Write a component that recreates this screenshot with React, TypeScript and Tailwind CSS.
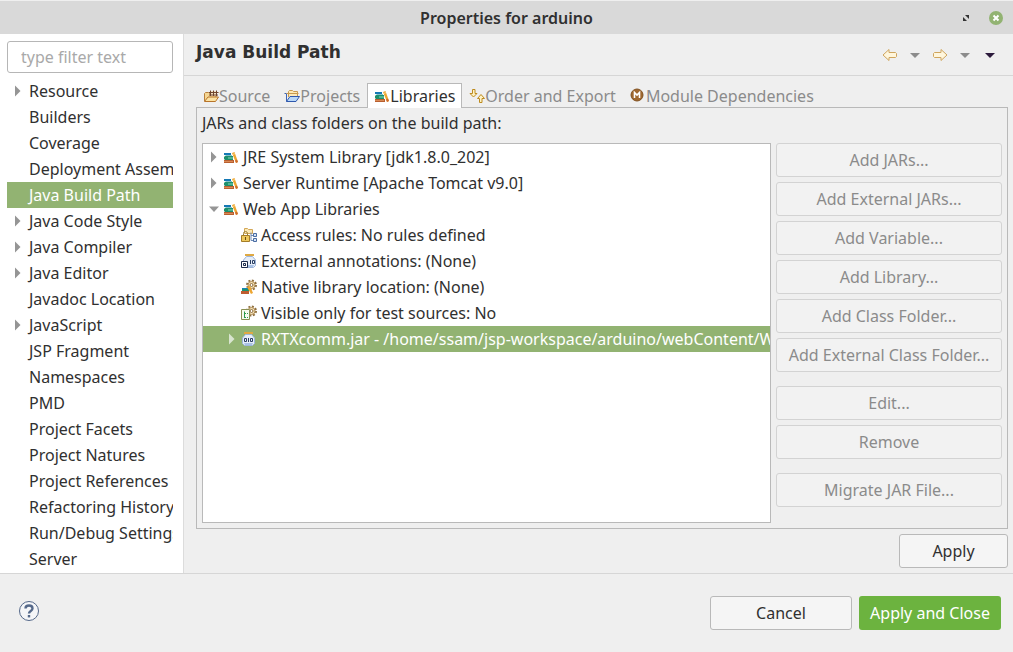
import { useState } from "react";
import type { ReactNode } from "react";
import clsx from "clsx";

type Page = { name: string; expandable?: boolean };

type Entry = {
  label: string;
  icon: ReactNode;
  depth: number;
  arrow?: "closed" | "open";
};

const pages: Page[] = [
  { name: "Resource", expandable: true },
  { name: "Builders" },
  { name: "Coverage" },
  { name: "Deployment Assembly" },
  { name: "Java Build Path" },
  { name: "Java Code Style", expandable: true },
  { name: "Java Compiler", expandable: true },
  { name: "Java Editor", expandable: true },
  { name: "Javadoc Location" },
  { name: "JavaScript", expandable: true },
  { name: "JSP Fragment" },
  { name: "Namespaces" },
  { name: "PMD" },
  { name: "Project Facets" },
  { name: "Project Natures" },
  { name: "Project References" },
  { name: "Refactoring History" },
  { name: "Run/Debug Settings" },
  { name: "Server" },
];

function Arrow({ open, light }: { open?: boolean; light?: boolean }) {
  return (
    <svg className="w-3 h-3 shrink-0" viewBox="0 0 12 12" fill={light ? "#d9e5d0" : "#959595"}>
      {open ? <path d="M1 3.500h10L6 9z" /> : <path d="M3 .5v11L8.500 6z" />}
    </svg>
  );
}

function Icon({ children }: { children: ReactNode }) {
  return (
    <svg className="w-4 h-4 shrink-0" viewBox="0 0 16 16" fill="none" aria-hidden="true">
      {children}
    </svg>
  );
}

function BooksIcon() {
  return (
    <Icon>
      <path d="M1 4h7v2H1z" fill="#1579b5" />
      <path d="M3 6h6v1H2z" fill="#7fc0c8" />
      <path d="M2 7h8v4H2l-1-1V8z" fill="#1c8f6c" />
      <path d="M5 8h5v2H5z" fill="#4fb391" />
      <path d="M1 11h10v3H1z" fill="#b85f30" />
      <path d="M1 12h9v1H1z" fill="#d98a55" />
      <path d="M9 4l2.500-1L15 13l-2 1z" fill="#eda632" />
      <path d="M12 11.500l2-1 1 2.500-2 1z" fill="#cf6b2d" />
      <path d="M10 5.500l2-1" stroke="#fad27e" />
    </Icon>
  );
}

function SourceIcon() {
  return (
    <Icon>
      <path d="M1.500 13V5.500l1-1h3l1 1H13V9" fill="#f6d794" stroke="#b8803c" />
      <path d="M7 3h7v5H7z" fill="#f3e0c0" />
      <path d="M6 4.500h9.500M6 7h9M7.500 2.500V8M10.500 2.500V8M13.500 2.500V8" stroke="#70452e" />
      <path d="M1.500 13.500L5 9h10.500l-3 4.500z" fill="#fce3a3" stroke="#b8742a" />
    </Icon>
  );
}

function ProjectsIcon() {
  return (
    <Icon>
      <path d="M4.500 9V3.500l1-1h3l1 1h4V9" fill="#fbe9b8" stroke="#c89a4e" />
      <path d="M2.500 13.500V5.500H0.500" stroke="#3d63b5" />
      <path d="M2.500 5.500h12" stroke="#c89a4e" />
      <path d="M2.500 13.500l3.500-5h9.500l-3.500 5z" fill="#b9d8f8" stroke="#2f58ad" />
    </Icon>
  );
}

function OrderIcon() {
  return (
    <Icon>
      <path d="M3.500 1.500h2.500v4h2L4.500 9 1 5.500h2.500z" fill="#fff3c4" stroke="#bd8a1e" />
      <path d="M10.500 14.500H13v-4h2.500L12 6.500 8.500 10.500h2z" fill="#fff3c4" stroke="#bd8a1e" />
    </Icon>
  );
}

function ModuleIcon() {
  return (
    <Icon>
      <circle cx="7" cy="7" r="6" fill="#a0682f" stroke="#80501f" />
      <path d="M4.500 10V4.500L7 7l2.500-2.500V10" stroke="#fff" strokeWidth="1.600" />
    </Icon>
  );
}

function AccessIcon() {
  return (
    <Icon>
      <path d="M3.500 6.500v-5h3l1 1h4v4z" fill="#fbe8b5" stroke="#d3a757" />
      <path d="M10 5.500v8h3M10 8.500h3" stroke="#6f8bb5" />
      <path d="M12.500 6.500h3v3h-3zM12.500 11.500h3v3h-3z" fill="#d5e3f6" stroke="#4a6da3" />
      <path d="M2.500 8.500v-2a2 2 0 0 1 4 0v2" stroke="#9b8238" />
      <path d="M.5 8.500h8v6h-8z" fill="#edc85c" stroke="#a47d28" />
      <path d="M4 10h1v3H4z" fill="#6b4e14" />
    </Icon>
  );
}

function Jar() {
  return (
    <>
      <path d="M3 1h9v2H3z" fill="#dfa943" />
      <path d="M4.500 3.500h6l3 3.500v5.500l-2 2h-8l-2-2V7z" fill="#e6eef9" stroke="#9db5db" />
      <path d="M3 12h9l-1 2H4z" fill="#a9c2e6" />
    </>
  );
}

function JarIcon() {
  return (
    <Icon>
      <Jar />
      <path d="M3.500 7.500h2v3h-2zM7.500 7v4M9.500 7.500h2v3h-2z" stroke="#2a3f63" />
    </Icon>
  );
}

function AnnotationIcon() {
  return (
    <Icon>
      <g transform="translate(1)">
        <Jar />
      </g>
      <path d="M9.500 7v4M11.500 7.500h2v3h-2z" stroke="#2a3f63" />
      <path d="M.5 8.500h6v6h-6z" fill="#fff" stroke="#1d2b4c" />
      <path d="M5 12.500H2.500v-2h2v1.500" stroke="#1d2b4c" />
    </Icon>
  );
}

function Gear() {
  return (
    <>
      <circle cx="10.500" cy="6" r="4.500" stroke="#8f7040" strokeWidth="2" strokeDasharray="2 1.500" />
      <circle cx="10.500" cy="6" r="3.500" fill="#f5e3b8" stroke="#b08c55" />
      <circle cx="10.500" cy="6" r="1.500" fill="#fff" stroke="#8b6a3c" />
    </>
  );
}

function NativeIcon() {
  return (
    <Icon>
      <Gear />
      <path d="M1 9h6v1H1z" fill="#1583b8" />
      <path d="M1 10h7v2H1z" fill="#1c9272" />
      <path d="M0 12h8v3H0z" fill="#bf5d30" />
      <path d="M6 8l3-1 3 7-2 1z" fill="#eda632" />
    </Icon>
  );
}

function TestIcon() {
  return (
    <Icon>
      <Gear />
      <path d="M.5 4.500h8v10h-8z" fill="#f7faf0" stroke="#8a8f52" />
      <path d="M3.500 6.500v6M3 8.500h2M3 12.500h2M6 8.500h1M6 12.500h1" stroke="#2c9a4b" />
    </Icon>
  );
}

const tabs = [
  { name: "Source", icon: <SourceIcon /> },
  { name: "Projects", icon: <ProjectsIcon /> },
  { name: "Libraries", icon: <BooksIcon /> },
  { name: "Order and Export", icon: <OrderIcon /> },
  { name: "Module Dependencies", icon: <ModuleIcon /> },
];

const entries: Entry[] = [
  { label: "JRE System Library [jdk1.8.0_202]", icon: <BooksIcon />, depth: 0, arrow: "closed" },
  { label: "Server Runtime [Apache Tomcat v9.0]", icon: <BooksIcon />, depth: 0, arrow: "closed" },
  { label: "Web App Libraries", icon: <BooksIcon />, depth: 0, arrow: "open" },
  { label: "Access rules: No rules defined", icon: <AccessIcon />, depth: 1 },
  { label: "External annotations: (None)", icon: <AnnotationIcon />, depth: 1 },
  { label: "Native library location: (None)", icon: <NativeIcon />, depth: 1 },
  { label: "Visible only for test sources: No", icon: <TestIcon />, depth: 1 },
  {
    label: "RXTXcomm.jar - /home/ssam/jsp-workspace/arduino/webContent/WEB-INF/lib",
    icon: <JarIcon />,
    depth: 1,
    arrow: "closed",
  },
];

const actionGroups = [
  ["Add JARs...", "Add External JARs...", "Add Variable...", "Add Library...", "Add Class Folder...", "Add External Class Folder..."],
  ["Edit...", "Remove"],
  ["Migrate JAR File..."],
];

function TitleBar() {
  return (
    <header className="relative flex h-[34px] shrink-0 items-center justify-center border-t border-[#efefef] bg-[#d9d9d9]">
      <h1 className="text-[16px] font-semibold">Properties for arduino</h1>
      <div className="absolute right-2.5 flex items-center gap-4">
        <button type="button" aria-label="Maximize">
          <svg className="w-3.5 h-3.5" viewBox="0 0 14 14" fill="#333">
            <path d="M6 4h4v4zM4 6v4h4z" />
          </svg>
        </button>
        <button type="button" aria-label="Close">
          <svg className="w-3.5 h-3.5" viewBox="0 0 14 14">
            <circle cx="7" cy="7" r="7" fill="#92b372" />
            <path d="M4.500 4.500l5 5M9.500 4.500l-5 5" stroke="#fff" strokeWidth="2" />
          </svg>
        </button>
      </div>
    </header>
  );
}

function Sidebar() {
  const [selected, setSelected] = useState("Java Build Path");

  return (
    <nav className="w-[184px] shrink-0 border-r border-[#dcdcdc] bg-white pt-[7px] pr-2.5 pl-[7px]">
      <input
        type="text"
        aria-label="Filter pages"
        placeholder="type filter text"
        className="mb-[5px] block h-8 w-full rounded-[3px] border border-[#b6b6b6] px-[13px] placeholder:text-[#a9a9a9]"
      />
      <ul>
        {pages.map((page) => (
          <li key={page.name}>
            <button
              type="button"
              onClick={() => setSelected(page.name)}
              className={clsx(
                "flex h-[26px] w-full items-center gap-[5px] overflow-hidden pl-[5px] whitespace-nowrap",
                selected === page.name && "bg-[#92b372] text-white"
              )}
            >
              {page.expandable ? <Arrow /> : <span className="w-3 shrink-0" />}
              {page.name}
            </button>
          </li>
        ))}
      </ul>
    </nav>
  );
}

function MenuArrow({ label, color }: { label: string; color: string }) {
  return (
    <button type="button" aria-label={label}>
      <svg className="w-4 h-4" viewBox="0 0 16 16" fill={color}>
        <path d="M3 6h10l-5 5z" />
      </svg>
    </button>
  );
}

function History() {
  return (
    <div className="flex items-center gap-[9px]">
      <button type="button" aria-label="Back">
        <svg className="w-4 h-4" viewBox="0 0 16 16">
          <path d="M1 8l6-5.500v3h6.500l1 1v3l-1 1H7v3z" fill="#fff6dc" stroke="#cfa55e" strokeLinejoin="round" />
        </svg>
      </button>
      <MenuArrow label="Back history" color="#8c8c8c" />
      <button type="button" aria-label="Forward">
        <svg className="w-4 h-4" viewBox="0 0 16 16">
          <path d="M15 8L9 2.500v3H2.500l-1 1v3l1 1H9v3z" fill="#fff6dc" stroke="#cfa55e" strokeLinejoin="round" />
        </svg>
      </button>
      <MenuArrow label="Forward history" color="#8c8c8c" />
      <MenuArrow label="View menu" color="#2c1a3c" />
    </div>
  );
}

function LibraryTree() {
  const [selected, setSelected] = useState(entries.length - 1);

  return (
    <ul className="min-w-0 flex-1 overflow-hidden border border-[#b9b9b9] bg-white">
      {entries.map((entry, i) => (
        <li key={entry.label}>
          <button
            type="button"
            onClick={() => setSelected(i)}
            className={clsx(
              "flex h-[26px] w-full items-center whitespace-nowrap",
              entry.depth === 0 ? "pl-[5px]" : "pl-[23px]",
              selected === i && "bg-[#92b372] text-white"
            )}
          >
            {entry.arrow ? (
              <Arrow open={entry.arrow === "open"} light={selected === i} />
            ) : (
              <span className="w-3 shrink-0" />
            )}
            <span className="ml-[3px] mr-1">{entry.icon}</span>
            {entry.label}
          </button>
        </li>
      ))}
    </ul>
  );
}

export default function App() {
  const [tab, setTab] = useState("Libraries");

  return (
    <div className="flex min-h-screen flex-col bg-[#efefef] font-['Noto_Sans',sans-serif] text-[16px] leading-6 text-[#303030]">
      <TitleBar />

      <div className="flex flex-1">
        <Sidebar />

        <main className="flex min-w-0 flex-1 flex-col">
          <div className="flex h-[42px] items-center justify-between border-b border-[#d6d6d6] pr-[15px] pl-3">
            <h2 className="pb-1.5 font-['DejaVu_Sans',sans-serif] text-[17px] font-bold">Java Build Path</h2>
            <History />
          </div>

          <div className="flex flex-1 flex-col pt-[7px] pr-[5px] pb-[5px] pl-3">
            <div role="tablist" className="z-10 -mb-px flex">
              {tabs.map(({ name, icon }) => (
                <button
                  key={name}
                  type="button"
                  role="tab"
                  aria-selected={tab === name}
                  onClick={() => setTab(name)}
                  className={clsx(
                    "flex h-[25px] items-center border border-b-0 px-1.5 whitespace-nowrap",
                    tab === name ? "border-[#b9b9b9] bg-white" : "border-transparent text-[#8b8b8b]"
                  )}
                >
                  {icon}
                  {name}
                </button>
              ))}
            </div>

            <section className="flex flex-1 flex-col border border-[#b9b9b9] px-[5px] pt-[3px] pb-[5px]">
              <p className="mb-2">JARs and class folders on the build path:</p>
              <div className="flex flex-1 gap-[5px]">
                <LibraryTree />
                <div className="flex w-[226px] shrink-0 flex-col gap-3.5">
                  {actionGroups.map((group) => (
                    <div key={group[0]} className="flex flex-col gap-[5px]">
                      {group.map((label) => (
                        <button
                          key={label}
                          type="button"
                          disabled
                          className="h-[34px] rounded-[3px] border border-[#d3d3d3] bg-[#f2f2f2] whitespace-nowrap text-[#8b8b8b]"
                        >
                          {label}
                        </button>
                      ))}
                    </div>
                  ))}
                </div>
              </div>
            </section>

            <button
              type="button"
              className="mt-[5px] h-[34px] w-[109px] self-end rounded-[3px] border border-[#b9b9b9] bg-[#f5f5f5]"
            >
              Apply
            </button>
          </div>
        </main>
      </div>

      <footer className="flex items-center border-t border-[#d6d6d6] pt-[22px] pr-3 pb-[22px] pl-[18px]">
        <button type="button" aria-label="Help" className="mb-1">
          <svg className="w-[22px] h-[22px]" viewBox="0 0 22 22" fill="none" stroke="#55698a">
            <circle cx="11" cy="11" r="9.500" fill="#f5f6f8" />
            <path d="M7.500 8.500c0-4 7-4 7 0 0 2.500-3.500 2.500-3.500 5" strokeWidth="2.400" />
            <path d="M11 15v2.400" strokeWidth="2.400" />
          </svg>
        </button>
        <button
          type="button"
          className="mr-[7px] ml-auto h-[34px] w-[142px] rounded-[3px] border border-[#b9b9b9] bg-[#f5f5f5]"
        >
          Cancel
        </button>
        <button type="button" className="h-[34px] w-[142px] rounded-[3px] bg-[#6cb33f] whitespace-nowrap text-white">
          Apply and Close
        </button>
      </footer>
    </div>
  );
}
